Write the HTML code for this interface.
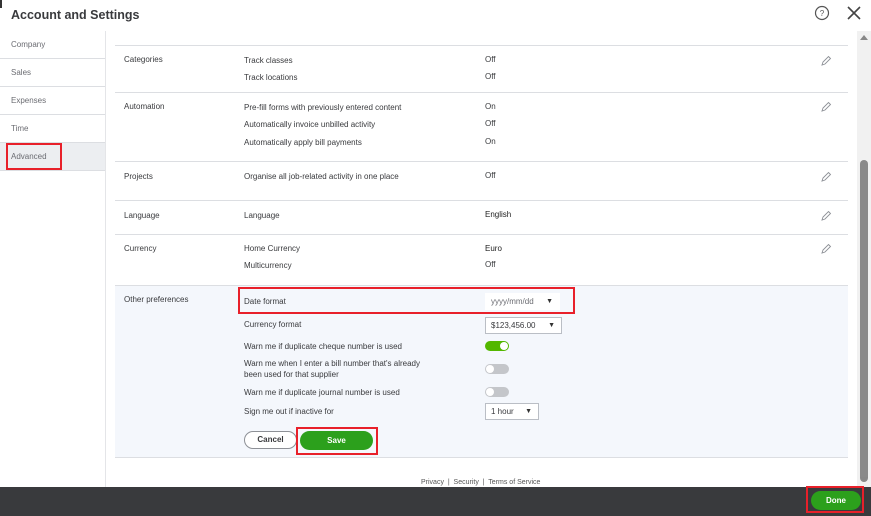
<!DOCTYPE html>
<html><head><style>
*{margin:0;padding:0;box-sizing:border-box}
body{width:871px;height:516px;background:#fff;font-family:"Liberation Sans",sans-serif;position:relative;overflow:hidden;color:#393a3d}
.a{position:absolute;white-space:nowrap}
.t{font-size:8px;color:#393a3d}
.h{position:absolute;height:1px;background:#dcdee2;left:115px;width:733px}
.sl{position:absolute;height:1px;background:#dcdee2;left:0;width:105px}
.sb{font-size:8px;color:#6b6c72;left:11px}
.pen{position:absolute;left:820px;width:12px;height:12px}
.red{position:absolute;border:2px solid #e8202a}
.tg{position:absolute;width:24px;height:10px;border-radius:5px;background:#c4c6ca}
.tg i{position:absolute;top:1px;left:1px;width:8px;height:8px;border-radius:50%;background:#fff}
.sel{position:absolute;border:1px solid #babec5;background:#fff;font-size:8px;color:#393a3d;padding-left:5px;line-height:15px}
</style></head><body>
<div class="a" style="left:0;top:0;width:2px;height:8px;background:#333"></div>
<div class="a" style="left:11px;top:8px;font-size:12.5px;font-weight:bold;color:#393a3d">Account and Settings</div>
<svg class="a" style="left:814px;top:5px" width="16" height="16"><circle cx="8" cy="8" r="6.5" fill="none" stroke="#555" stroke-width="1.2"/><text x="8" y="11" font-size="8" text-anchor="middle" fill="#555" font-family="Liberation Sans">?</text></svg>
<svg class="a" style="left:846px;top:5px" width="16" height="16"><path d="M2 2L14 14M14 2L2 14" stroke="#444" stroke-width="1.6"/></svg>
<div class="a" style="left:105px;top:31px;width:1px;height:456px;background:#e4e5e8"></div>
<div class="a" style="left:0;top:142px;width:105px;height:28px;background:#eceef1"></div>
<div class="a sb" style="top:40px">Company</div>
<div class="sl" style="top:58px"></div>
<div class="a sb" style="top:68px">Sales</div>
<div class="sl" style="top:86px"></div>
<div class="a sb" style="top:96px">Expenses</div>
<div class="sl" style="top:114px"></div>
<div class="a sb" style="top:124px">Time</div>
<div class="sl" style="top:142px"></div>
<div class="a sb" style="top:152px">Advanced</div>
<div class="sl" style="top:170px"></div>
<div class="red" style="left:6px;top:143px;width:56px;height:27px"></div>
<div class="h" style="top:45px"></div>
<div class="a t" style="left:124px;top:55px">Categories</div>
<div class="a t" style="left:244px;top:56px">Track classes</div>
<div class="a t" style="left:244px;top:73px">Track locations</div>
<div class="a t" style="left:485px;top:55px">Off</div>
<div class="a t" style="left:485px;top:72px">Off</div>
<div class="h" style="top:92px"></div>
<div class="a t" style="left:124px;top:102px">Automation</div>
<div class="a t" style="left:244px;top:103px">Pre-fill forms with previously entered content</div>
<div class="a t" style="left:244px;top:120px">Automatically invoice unbilled activity</div>
<div class="a t" style="left:244px;top:138px">Automatically apply bill payments</div>
<div class="a t" style="left:485px;top:102px">On</div>
<div class="a t" style="left:485px;top:119px">Off</div>
<div class="a t" style="left:485px;top:137px">On</div>
<div class="h" style="top:161px"></div>
<div class="a t" style="left:124px;top:172px">Projects</div>
<div class="a t" style="left:244px;top:172px">Organise all job-related activity in one place</div>
<div class="a t" style="left:485px;top:171px">Off</div>
<div class="h" style="top:200px"></div>
<div class="a t" style="left:124px;top:211px">Language</div>
<div class="a t" style="left:244px;top:211px">Language</div>
<div class="a t" style="left:485px;top:210px;color:#222">English</div>
<div class="h" style="top:234px"></div>
<div class="a t" style="left:124px;top:244px">Currency</div>
<div class="a t" style="left:244px;top:244px">Home Currency</div>
<div class="a t" style="left:244px;top:261px">Multicurrency</div>
<div class="a t" style="left:485px;top:244px;color:#222">Euro</div>
<div class="a t" style="left:485px;top:260px">Off</div>
<div class="h" style="top:285px"></div>
<svg class="pen" style="top:55px" viewBox="0 0 12 12"><path d="M2 10L3 7L8.5 1.5L10.5 3.5L5 9Z" fill="none" stroke="#8d9096" stroke-width=".9"/></svg>
<svg class="pen" style="top:101px" viewBox="0 0 12 12"><path d="M2 10L3 7L8.5 1.5L10.5 3.5L5 9Z" fill="none" stroke="#8d9096" stroke-width=".9"/></svg>
<svg class="pen" style="top:171px" viewBox="0 0 12 12"><path d="M2 10L3 7L8.5 1.5L10.5 3.5L5 9Z" fill="none" stroke="#8d9096" stroke-width=".9"/></svg>
<svg class="pen" style="top:210px" viewBox="0 0 12 12"><path d="M2 10L3 7L8.5 1.5L10.5 3.5L5 9Z" fill="none" stroke="#8d9096" stroke-width=".9"/></svg>
<svg class="pen" style="top:243px" viewBox="0 0 12 12"><path d="M2 10L3 7L8.5 1.5L10.5 3.5L5 9Z" fill="none" stroke="#8d9096" stroke-width=".9"/></svg>
<div class="a" style="left:115px;top:286px;width:733px;height:171px;background:#f4f7fc"></div>
<div class="h" style="top:457px"></div>
<div class="a t" style="left:124px;top:295px">Other preferences</div>
<div class="a t" style="left:244px;top:297px">Date format</div>
<div class="sel" style="left:485px;top:293px;width:75px;height:17px;border-color:#fff;color:#6b6c72">yyyy/mm/dd<span style="position:absolute;right:6px;font-size:7px;color:#333">▼</span></div>
<div class="red" style="left:238px;top:287px;width:337px;height:27px"></div>
<div class="a t" style="left:244px;top:320px">Currency format</div>
<div class="sel" style="left:485px;top:317px;width:77px;height:17px">$123,456.00<span style="position:absolute;right:6px;font-size:7px;color:#333">▼</span></div>
<div class="a t" style="left:244px;top:342px">Warn me if duplicate cheque number is used</div>
<div class="tg" style="left:485px;top:341px;background:#53b700"><i style="left:15px"></i></div>
<div class="a t" style="left:244px;top:359px">Warn me when I enter a bill number that's already</div>
<div class="a t" style="left:244px;top:370px">been used for that supplier</div>
<div class="tg" style="left:485px;top:364px"><i></i></div>
<div class="a t" style="left:244px;top:388px">Warn me if duplicate journal number is used</div>
<div class="tg" style="left:485px;top:387px"><i></i></div>
<div class="a t" style="left:244px;top:407px">Sign me out if inactive for</div>
<div class="sel" style="left:485px;top:403px;width:54px;height:17px">1 hour<span style="position:absolute;right:6px;font-size:7px;color:#333">▼</span></div>
<div class="a" style="left:244px;top:431px;width:53px;height:18px;border:1px solid #8d9096;border-radius:9px;background:#fff;font-size:8px;font-weight:bold;text-align:center;line-height:16px">Cancel</div>
<div class="a" style="left:300px;top:431px;width:73px;height:19px;border-radius:10px;background:#2ca01c;color:#fff;font-size:8px;font-weight:bold;text-align:center;line-height:19px">Save</div>
<div class="red" style="left:296px;top:427px;width:82px;height:28px"></div>
<div class="a" style="left:421px;top:479px;font-size:7px;color:#555">Privacy &nbsp;|&nbsp; Security &nbsp;|&nbsp; Terms of Service</div>
<div class="a" style="left:857px;top:31px;width:14px;height:456px;background:#f1f1f1"></div>
<div class="a" style="left:860px;top:35px;width:0;height:0;border-left:4px solid transparent;border-right:4px solid transparent;border-bottom:5px solid #888"></div>
<div class="a" style="left:860px;top:160px;width:8px;height:322px;background:#8a8a8a;border-radius:4px"></div>
<div class="a" style="left:860px;top:477px;width:0;height:0;border-left:4px solid transparent;border-right:4px solid transparent;border-top:5px solid #888"></div>
<div class="a" style="left:0;top:487px;width:871px;height:29px;background:#393a3d"></div>
<div class="a" style="left:811px;top:491px;width:50px;height:19px;border-radius:10px;background:#2ca01c;color:#fff;font-size:8px;font-weight:bold;text-align:center;line-height:19px">Done</div>
<div class="red" style="left:806px;top:486px;width:58px;height:27px"></div>
</body></html>
